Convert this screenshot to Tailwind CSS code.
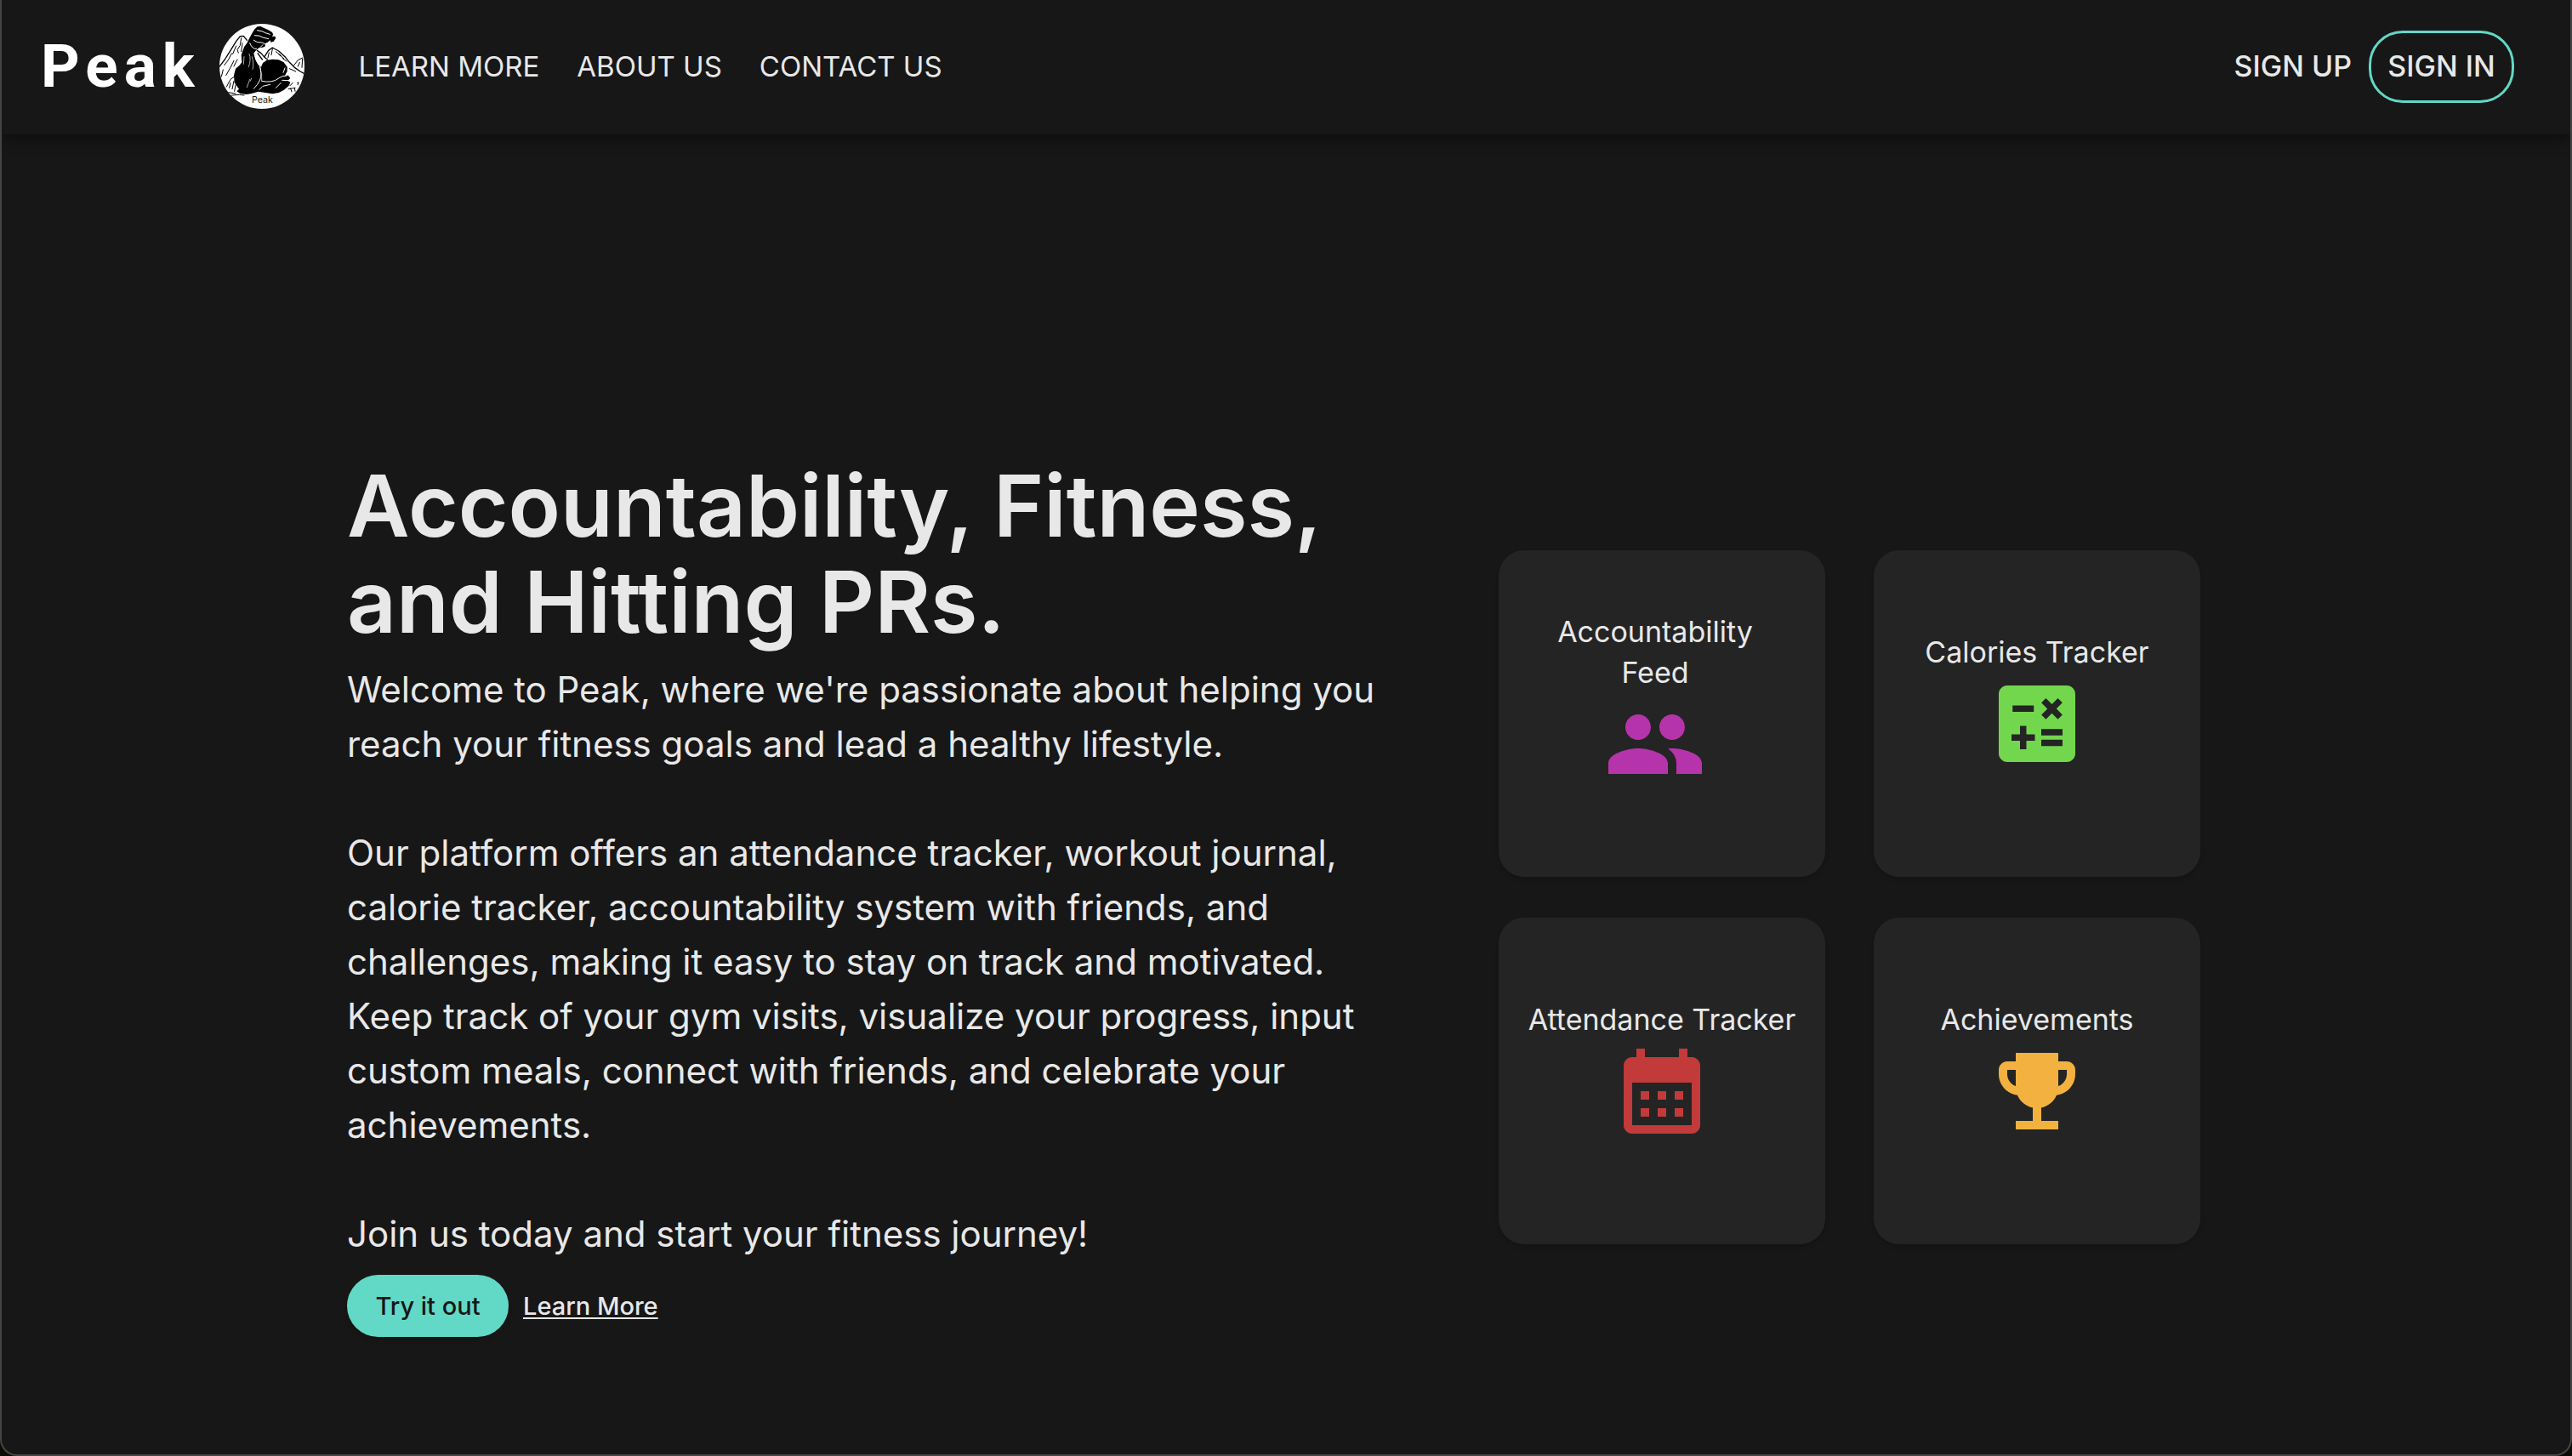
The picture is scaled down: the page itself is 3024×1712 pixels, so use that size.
<!DOCTYPE html>
<html lang="en">
<head>
<meta charset="utf-8">
<meta name="viewport" content="width=device-width, initial-scale=1">
<title>Peak</title>
<script src="https://cdn.jsdelivr.net/npm/@tailwindcss/browser@4"></script>
</head>
<body class="bg-[#0c0c06] font-['Inter',sans-serif] text-[#e8e8e8]">
<div class="flex min-h-screen flex-col overflow-hidden rounded-b-[20px] border-x-2 border-b-2 border-[#454545] bg-[#171717]">
  <header class="flex h-[158px] shrink-0 items-center pr-[66px] pb-[2px] pl-[46px] shadow-[0_4px_16px_rgba(0,0,0,0.5)]">
    <a href="#" class="flex items-center gap-[22px]">
      <span class="font-['Roboto',sans-serif] text-[71px] leading-[100px] font-bold tracking-[7px] text-white">Peak</span>
      <svg class="size-[100px]" viewBox="53 54 300 300" role="img" aria-label="Peak logo">
        <defs><clipPath id="disc"><circle cx="203" cy="204" r="150"/></clipPath></defs>
        <circle cx="203" cy="204" r="150" fill="#fff"/>
        <g clip-path="url(#disc)">
          <g fill="none" stroke="#000" stroke-width="4" stroke-linecap="round" stroke-linejoin="round">
            <path d="M52 206 L72 180 L92 148 L112 116 L126 98 L138 97 L150 112"/>
            <path d="M130 104 L126 130 L116 146 L120 156 M96 158 L84 182 L70 200 M112 132 L100 160 M134 122 L130 152 M104 184 L92 208 L76 236 M66 216 L60 240 M116 180 L104 204" stroke-width="3"/>
            <path d="M78 276 L92 250 L106 240 M92 262 L88 280 M104 256 L98 284 M110 270 L106 292 M84 296 L110 300 M96 306 L124 304 L140 306" stroke-width="3"/>
            <path d="M186 148 L200 158 L212 172 L222 180 M188 158 L204 180 M212 170 L226 148 L240 138 L262 150 L284 170 L300 190 L318 208 L338 222 L356 232"/>
            <path d="M240 142 L236 164 M228 156 L224 174 M252 152 L270 166 M262 162 L280 176 M276 176 L290 186" stroke-width="3"/>
            <path d="M316 200 L330 182 L346 174 M346 178 L344 208 M336 190 L330 204 M300 212 L322 222 M328 262 q6 -4 4 2 q-6 4 -2 6 M312 262 L302 272 M296 284 L320 280 M304 282 L308 294 M318 280 L320 292" stroke-width="3"/>
          </g>
          <path d="M187 64 L198 63 L212 70 L226 76 L239 84 L243 92 L238 98 L249 98 L252 104 L244 116 L234 119 L232 112 L222 120 L213 124 L215 133 L206 137 L192 139 L180 150 L174 158 L180 180 L190 198 L200 206 L206 192 L220 182 L240 179 L262 181 L280 190 L292 206 L292 222 L284 236 L296 236 L303 246 L294 254 L303 260 L298 272 L280 288 L262 297 L240 301 L220 298 L190 293 L166 300 L148 303 L126 300 L114 292 L122 284 L106 262 L104 236 L110 212 L124 200 L132 190 L130 164 L140 136 L150 122 L158 106 L168 88 L176 74 Z" fill="#000"/>
          <g fill="none" stroke="#fff" stroke-linecap="round" stroke-linejoin="round">
            <path d="M186 77 Q204 78 218 87 L231 91 M177 95 Q196 94 206 102 L226 107 M174 112 Q186 122 202 120 L213 124 M160 122 Q170 146 184 142 M198 136 L206 128" stroke-width="3"/>
            <path d="M177 160 Q182 190 195 202 Q204 232 196 252 Q188 270 174 283" stroke-width="3"/>
            <path d="M158 160 Q166 180 156 206 M168 170 Q176 198 170 214 M140 170 L138 196 M196 206 L202 236 L202 254 M160 250 L150 278 M166 246 L162 256" stroke-width="2"/>
            <path d="M202 256 Q240 264 262 246 Q274 236 290 237 M274 253 L296 254 M232 268 L206 274 L194 286 M270 262 L252 280 M284 210 L278 226" stroke-width="3"/>
          </g>
          <text x="204" y="334" text-anchor="middle" font-family="Inter, sans-serif" font-size="32" fill="#222">Peak</text>
        </g>
      </svg>
    </a>
    <nav class="ml-16 flex items-center gap-11 text-[33px] leading-12">
      <a href="#">LEARN MORE</a>
      <a href="#">ABOUT US</a>
      <a href="#">CONTACT US</a>
    </nav>
    <div class="ml-auto flex items-center gap-5 text-[34px] leading-12 font-medium">
      <a href="#">SIGN UP</a>
      <a href="#" class="flex h-[85px] w-[171px] items-center justify-center rounded-[40px] border-3 border-[#62d8c6]">SIGN IN</a>
    </div>
  </header>

  <main class="mx-auto flex w-full max-w-[2208px] items-center justify-between pt-[380px] pb-[138px]">
    <section>
      <h1 class="text-[101px] leading-[113px] font-semibold">Accountability, Fitness,<br>and Hitting PRs.</h1>
      <div class="mt-[15px] flex flex-col gap-16 text-[42px] leading-16">
        <p>Welcome to Peak, where we're passionate about helping you<br>reach your fitness goals and lead a healthy lifestyle.</p>
        <p>Our platform offers an attendance tracker, workout journal,<br>calorie tracker, accountability system with friends, and<br>challenges, making it easy to stay on track and motivated.<br>Keep track of your gym visits, visualize your progress, input<br>custom meals, connect with friends, and celebrate your<br>achievements.</p>
        <p>Join us today and start your fitness journey!</p>
      </div>
      <div class="mt-4 flex items-center gap-[17px] text-[29px] leading-10 font-medium">
        <button type="button" class="h-[73px] w-[190px] rounded-full bg-[#62d8c6] text-[#171717] shadow-md">Try it out</button>
        <a href="#" class="underline decoration-2 underline-offset-3">Learn More</a>
      </div>
    </section>

    <section class="mr-[29px] grid grid-cols-2 gap-x-[57px] gap-y-12 text-center text-[34px] leading-12">
      <article class="flex size-96 flex-col items-center justify-center rounded-[30px] bg-[#242424] pr-4 pb-6 shadow-md">
        <h2>Accountability<br>Feed</h2>
        <svg class="size-[120px] fill-[#b634ab]" viewBox="0 0 24 24" aria-hidden="true"><path d="M16 11c1.66 0 2.99-1.34 2.99-3S17.66 5 16 5s-3 1.34-3 3 1.34 3 3 3m-8 0c1.66 0 2.99-1.34 2.99-3S9.66 5 8 5 5 6.340 5 8s1.340 3 3 3m0 2c-2.330 0-7 1.170-7 3.500V19h14v-2.500c0-2.330-4.670-3.500-7-3.500m8 0c-.290 0-.620.020-.970.050 1.160.840 1.970 1.970 1.970 3.450V19h6v-2.500c0-2.330-4.670-3.500-7-3.500"/></svg>
      </article>
      <article class="flex size-96 flex-col items-center justify-center rounded-[30px] bg-[#242424] pb-6 shadow-md">
        <h2>Calories Tracker</h2>
        <svg class="size-[120px] fill-[#73d74d]" viewBox="0 0 24 24" aria-hidden="true"><path d="M19 3H5c-1.100 0-2 .9-2 2v14c0 1.100.9 2 2 2h14c1.100 0 2-.9 2-2V5c0-1.100-.9-2-2-2m-5.970 4.060L14.090 6l1.410 1.410L16.910 6l1.060 1.060-1.410 1.410 1.410 1.410-1.060 1.060-1.410-1.400-1.410 1.410-1.060-1.060 1.410-1.410zm-6.780.66h5v1.500h-5zM11.500 16h-2v2H8v-2H6v-1.500h2v-2h1.500v2h2zm6.500 1.250h-5v-1.500h5zm0-2.500h-5v-1.500h5z"/></svg>
      </article>
      <article class="flex size-96 flex-col items-center justify-center rounded-[30px] bg-[#242424] pb-6 shadow-md">
        <h2>Attendance Tracker</h2>
        <svg class="size-[120px] fill-[#c23a3a]" viewBox="0 0 24 24" aria-hidden="true"><path d="M19 4h-1V2h-2v2H8V2H6v2H5c-1.110 0-1.990.9-1.990 2L3 20c0 1.100.890 2 2 2h14c1.100 0 2-.9 2-2V6c0-1.100-.9-2-2-2m0 16H5V10h14zM9 14H7v-2h2zm4 0h-2v-2h2zm4 0h-2v-2h2zm-8 4H7v-2h2zm4 0h-2v-2h2zm4 0h-2v-2h2z"/></svg>
      </article>
      <article class="flex size-96 flex-col items-center justify-center rounded-[30px] bg-[#242424] pb-6 shadow-md">
        <h2>Achievements</h2>
        <svg class="size-[120px] fill-[#f3b13f]" viewBox="0 0 24 24" aria-hidden="true"><path d="M19 5h-2V3H7v2H5c-1.100 0-2 .9-2 2v1c0 2.550 1.920 4.630 4.390 4.940.630 1.500 1.980 2.630 3.610 2.960V19H7v2h10v-2h-4v-3.100c1.630-.330 2.980-1.460 3.610-2.960C19.080 12.630 21 10.550 21 8V7c0-1.100-.9-2-2-2M5 8V7h2v3.820C5.840 10.400 5 9.300 5 8m14 0c0 1.300-.840 2.400-2 2.820V7h2z"/></svg>
      </article>
    </section>
  </main>
</div>
</body>
</html>
